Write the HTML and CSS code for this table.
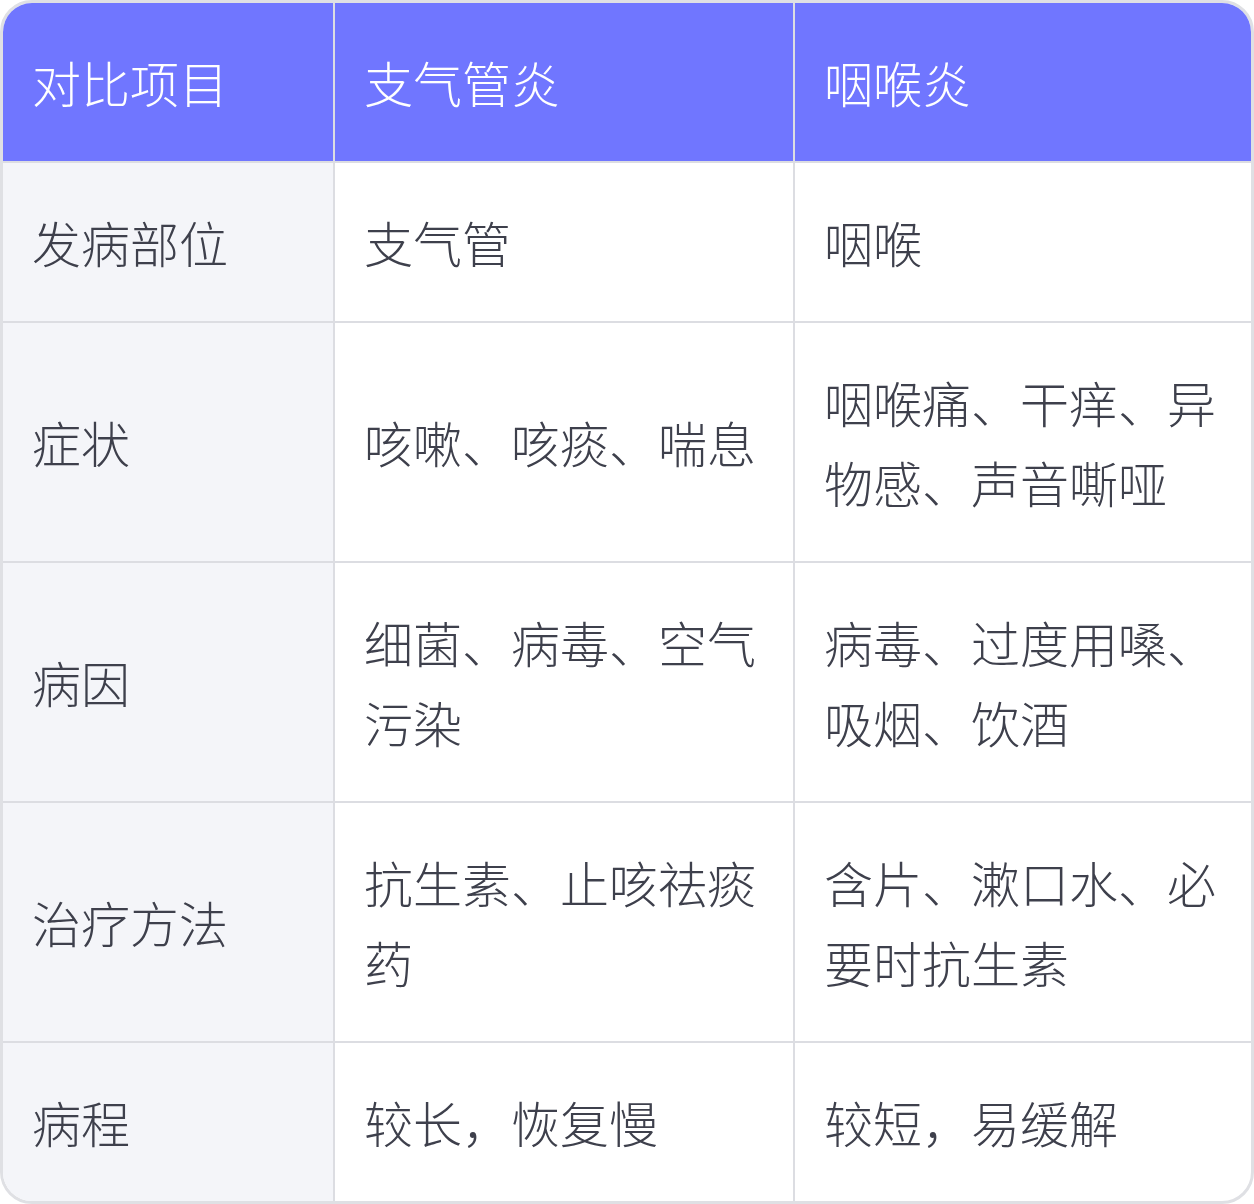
FILE: index.html
```html
<!DOCTYPE html>
<html lang="zh-CN">
<head>
<meta charset="utf-8">
<link rel="stylesheet" href="styles.css">
</head>
<body>
<div class="frame">
<table class="cmp">
<colgroup><col class="c1"><col class="c2"><col class="c3"></colgroup>
<thead>
<tr><th>对比项目</th><th>支气管炎</th><th>咽喉炎</th></tr>
</thead>
<tbody>
<tr><td>发病部位</td><td>支气管</td><td>咽喉</td></tr>
<tr><td>症状</td><td>咳嗽、咳痰、喘息</td><td>咽喉痛、干痒、异物感、声音嘶哑</td></tr>
<tr><td>病因</td><td>细菌、病毒、空气污染</td><td>病毒、过度用嗓、吸烟、饮酒</td></tr>
<tr><td>治疗方法</td><td>抗生素、止咳祛痰药</td><td>含片、漱口水、必要时抗生素</td></tr>
<tr><td>病程</td><td>较长，恢复慢</td><td>较短，易缓解</td></tr>
</tbody>
</table>
</div>
</body>
</html>
```
FILE: styles.css
```css
html, body {
  margin: 0;
  padding: 0;
  background: #ffffff;
}
.frame {
  width: 1254px;
  height: 1204px;
  box-sizing: border-box;
  border: 3px solid #dfe0e4;
  border-radius: 32px;
  overflow: hidden;
  background: #ffffff;
}
.cmp {
  width: 100%;
  border-collapse: collapse;
  table-layout: fixed;
  font-family: "Noto Sans CJK SC", "Noto Sans", sans-serif;
  font-size: 49px;
  line-height: 80px;
  color: #3e404c;
}
.c1 { width: 331px; }
.c2 { width: 460px; }
.c3 { width: 457px; }
.cmp th, .cmp td {
  padding: 39px 29px 39px 29px;
  text-align: left;
  vertical-align: middle;
  font-weight: 300;
  border: 2px solid #dcdde2;
}
.cmp th {
  background: #7076ff;
  color: #ffffff;
}
.cmp td:first-child {
  background: #f4f5f9;
}
.cmp tr > :first-child { border-left: none; }
.cmp tr > :last-child { border-right: none; }
.cmp thead tr > * { border-top: none; }
.cmp tbody tr:last-child > * { border-bottom: none; }
```
